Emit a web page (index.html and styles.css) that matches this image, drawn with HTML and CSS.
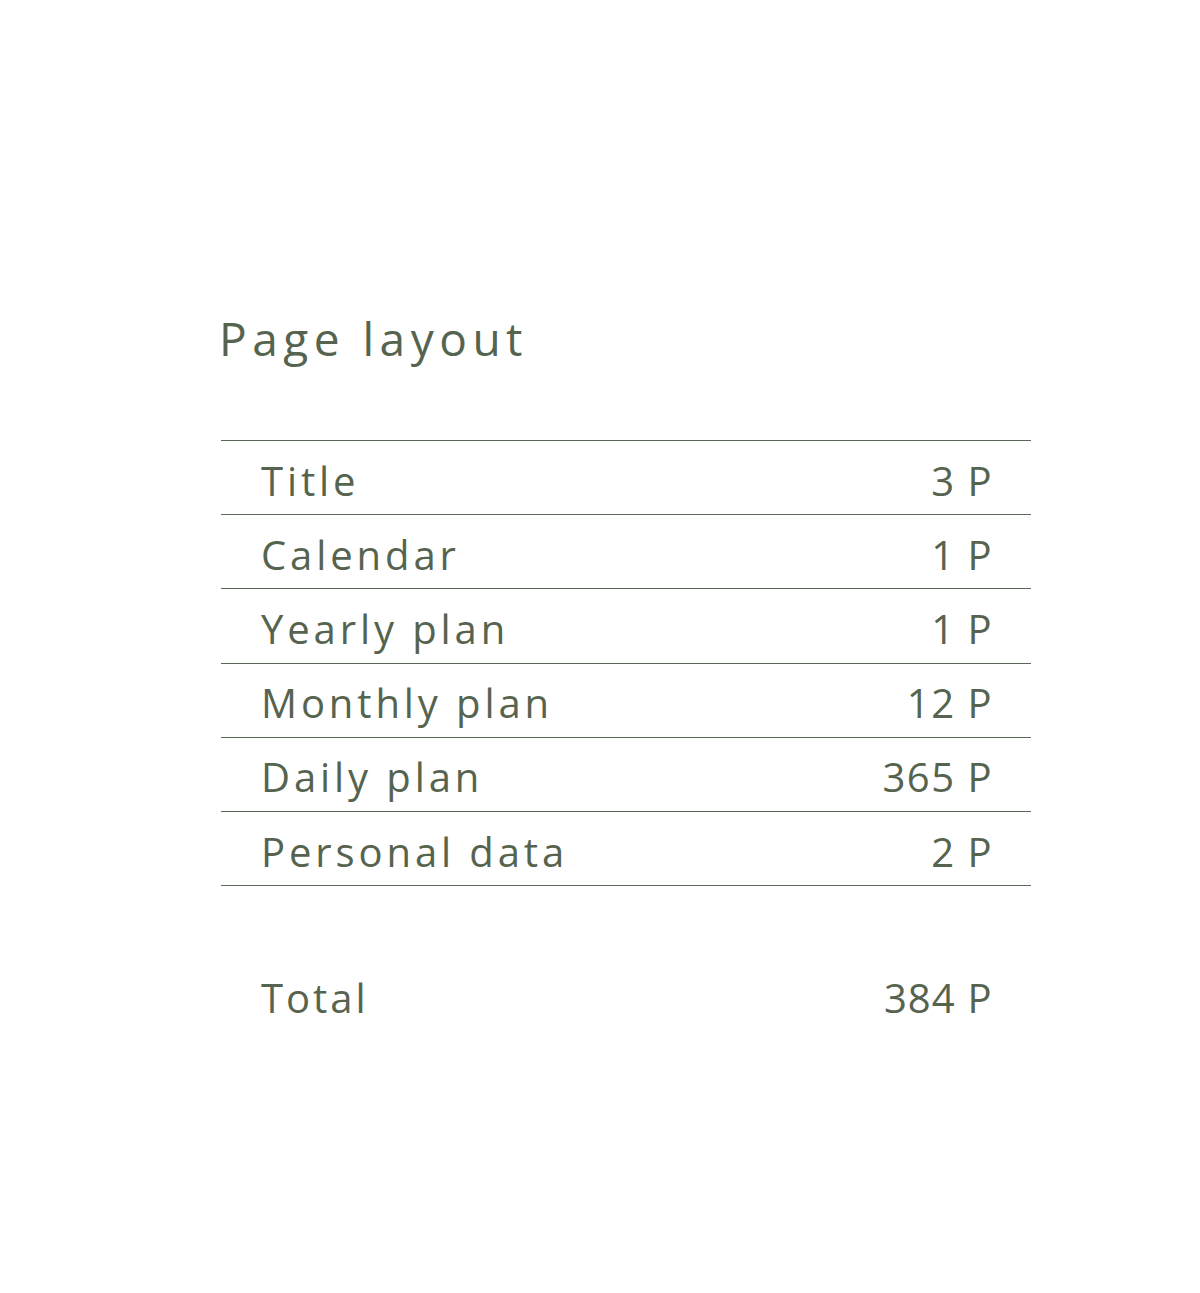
FILE: index.html
```html
<!DOCTYPE html>
<html>
<head>
<meta charset="utf-8">
<link rel="stylesheet" href="styles.css">
</head>
<body>
<main class="sheet">
  <h1 class="heading">Page layout</h1>
  <div class="table">
    <div class="row"><span class="label">Title</span><span class="count">3 P</span></div>
    <div class="row"><span class="label">Calendar</span><span class="count">1 P</span></div>
    <div class="row"><span class="label">Yearly plan</span><span class="count">1 P</span></div>
    <div class="row"><span class="label">Monthly plan</span><span class="count">12 P</span></div>
    <div class="row"><span class="label">Daily plan</span><span class="count">365 P</span></div>
    <div class="row"><span class="label">Personal data</span><span class="count">2 P</span></div>
  </div>
  <div class="total"><span class="label total-label">Total</span><span class="count"><b class="total-num">384</b> P</span></div>
</main>
</body>
</html>
```

FILE: styles.css
```css
html, body {
  margin: 0;
  padding: 0;
  background: #ffffff;
}
body {
  font-family: "Open Sans", "Liberation Sans", sans-serif;
  color: #56644f;
}
.sheet {
  width: 810px;
  margin-left: 221px;
  padding-top: 303px;
}
.heading {
  margin: 0 0 0 -2px;
  font-size: 46px;
  font-weight: 500;
  letter-spacing: 5.5px;
  line-height: 70px;
}
.table {
  margin-top: 67px;
  border-top: 1.5px solid #5a6858;
}
.row {
  border-bottom: 1.5px solid #5a6858;
  display: flex;
  align-items: center;
  justify-content: space-between;
  padding: 6px 38px 0 40px;
  box-sizing: border-box;
  height: 74.2px;
}
.label, .count {
  font-size: 40px;
  line-height: 1;
}
.label {
  font-weight: 500;
  letter-spacing: 3.9px;
}
.count {
  font-weight: 400;
  letter-spacing: 1.5px;
}
.total {
  display: flex;
  align-items: center;
  justify-content: space-between;
  padding: 0 38px 0 40px;
  height: 74px;
  margin-top: 75px;
}
.total-label {
  letter-spacing: 3px;
}
.total-num {
  font-weight: 500;
  letter-spacing: 1px;
}
```
